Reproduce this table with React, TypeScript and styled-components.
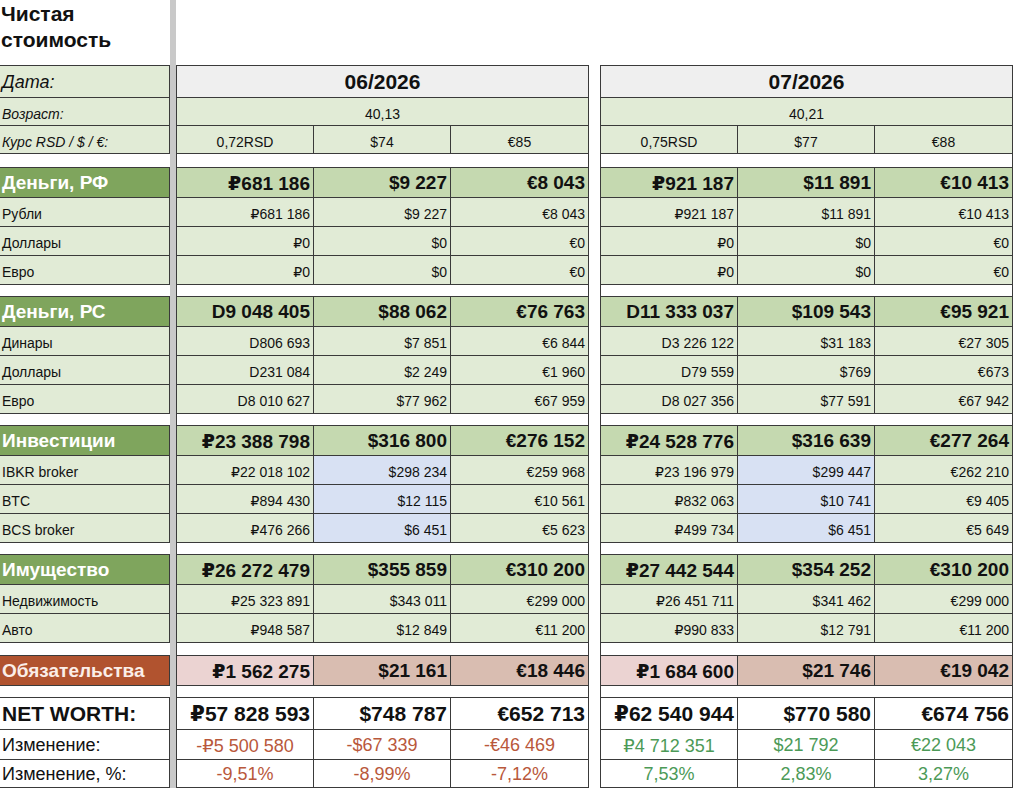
import React from "react";
import styled, { createGlobalStyle, css } from "styled-components";

const LINE = "#3a3a3a";
const PALE = "#e1ebd6";
const MID = "#c5d9b0";
const DARK = "#7fa55d";
const BLUE = "#d8e1f3";
const PINK = "#ebd3d2";
const SALMON = "#d9bdb1";
const BRICK = "#b1532f";
const RED = "#b9583b";
const GREEN = "#4c9a57";

type Triple = [string, string, string];

type Item = { label: string; a: Triple; b: Triple };
type Section = { title: string; a: Triple; b: Triple; items: Item[]; blueCol?: number };

const sections: Section[] = [
  {
    title: "Деньги, РФ",
    a: ["₽681 186", "$9 227", "€8 043"],
    b: ["₽921 187", "$11 891", "€10 413"],
    items: [
      { label: "Рубли", a: ["₽681 186", "$9 227", "€8 043"], b: ["₽921 187", "$11 891", "€10 413"] },
      { label: "Доллары", a: ["₽0", "$0", "€0"], b: ["₽0", "$0", "€0"] },
      { label: "Евро", a: ["₽0", "$0", "€0"], b: ["₽0", "$0", "€0"] },
    ],
  },
  {
    title: "Деньги, РС",
    a: ["D9 048 405", "$88 062", "€76 763"],
    b: ["D11 333 037", "$109 543", "€95 921"],
    items: [
      { label: "Динары", a: ["D806 693", "$7 851", "€6 844"], b: ["D3 226 122", "$31 183", "€27 305"] },
      { label: "Доллары", a: ["D231 084", "$2 249", "€1 960"], b: ["D79 559", "$769", "€673"] },
      { label: "Евро", a: ["D8 010 627", "$77 962", "€67 959"], b: ["D8 027 356", "$77 591", "€67 942"] },
    ],
  },
  {
    title: "Инвестиции",
    a: ["₽23 388 798", "$316 800", "€276 152"],
    b: ["₽24 528 776", "$316 639", "€277 264"],
    blueCol: 1,
    items: [
      { label: "IBKR broker", a: ["₽22 018 102", "$298 234", "€259 968"], b: ["₽23 196 979", "$299 447", "€262 210"] },
      { label: "BTC", a: ["₽894 430", "$12 115", "€10 561"], b: ["₽832 063", "$10 741", "€9 405"] },
      { label: "BCS broker", a: ["₽476 266", "$6 451", "€5 623"], b: ["₽499 734", "$6 451", "€5 649"] },
    ],
  },
  {
    title: "Имущество",
    a: ["₽26 272 479", "$355 859", "€310 200"],
    b: ["₽27 442 544", "$354 252", "€310 200"],
    items: [
      { label: "Недвижимость", a: ["₽25 323 891", "$343 011", "€299 000"], b: ["₽26 451 711", "$341 462", "€299 000"] },
      { label: "Авто", a: ["₽948 587", "$12 849", "€11 200"], b: ["₽990 833", "$12 791", "€11 200"] },
    ],
  },
];

const months = [
  { date: "06/2026", age: "40,13", rates: ["0,72RSD", "$74", "€85"] },
  { date: "07/2026", age: "40,21", rates: ["0,75RSD", "$77", "€88"] },
];

const liabilities: { a: Triple; b: Triple } = {
  a: ["₽1 562 275", "$21 161", "€18 446"],
  b: ["₽1 684 600", "$21 746", "€19 042"],
};

const netWorth: { a: Triple; b: Triple } = {
  a: ["₽57 828 593", "$748 787", "€652 713"],
  b: ["₽62 540 944", "$770 580", "€674 756"],
};

const change: { a: Triple; b: Triple } = {
  a: ["-₽5 500 580", "-$67 339", "-€46 469"],
  b: ["₽4 712 351", "$21 792", "€22 043"],
};

const changePct: { a: Triple; b: Triple } = {
  a: ["-9,51%", "-8,99%", "-7,12%"],
  b: ["7,53%", "2,83%", "3,27%"],
};

const GlobalStyle = createGlobalStyle`
  html, body { margin: 0; padding: 0; background: #fff; }
  body { font-family: "Liberation Sans", Arial, "DejaVu Sans", sans-serif; color: #111; }
`;

const Sheet = styled.div`
  width: 1024px;
  height: 791px;
  overflow: hidden;
  display: flex;
  flex-direction: column;
`;

const Row = styled.div<{ $h: number }>`
  display: flex;
  flex: none;
  height: ${(p) => p.$h}px;
`;

const Title = styled.div`
  width: 170px;
  flex: none;
  box-sizing: border-box;
  padding: 1px 0 0 1px;
  font-size: 21px;
  line-height: 26px;
  font-weight: 700;
  color: #111;
`;

type LabelKind = "date" | "meta" | "section" | "debt" | "item" | "net" | "change" | "blank";

const labelKinds: Record<LabelKind, ReturnType<typeof css>> = {
  date: css`background: ${PALE}; font-size: 18px; font-style: italic; padding-top: 2px;`,
  meta: css`background: ${PALE}; font-size: 14px; font-style: italic; padding-top: 4px;`,
  section: css`background: ${DARK}; color: #fff; font-size: 19px; font-weight: 700;`,
  debt: css`background: ${BRICK}; color: #fbeee8; font-size: 19px; font-weight: 700;`,
  item: css`background: ${PALE}; font-size: 14px; padding-top: 3px;`,
  net: css`background: #fff; font-size: 21px; font-weight: 700;`,
  change: css`background: #fff; font-size: 18px; padding-top: 2px;`,
  blank: css`background: #fff; border-color: transparent !important;`,
};

const Label = styled.div<{ $kind: LabelKind; $top?: boolean }>`
  width: 170px;
  flex: none;
  box-sizing: border-box;
  display: flex;
  align-items: center;
  padding-left: 2px;
  white-space: nowrap;
  border-right: 1px solid ${LINE};
  border-bottom: 1px solid ${LINE};
  border-top: ${(p) => (p.$top ? `1px solid ${LINE}` : "0")};
  ${(p) => labelKinds[p.$kind]}
`;

const Freeze = styled.div`
  width: 6px;
  flex: none;
  background: #c9c9c9;
`;

const Gutter = styled.div`
  width: 11px;
  flex: none;
`;

const Block = styled.div<{ $cols: number; $top?: boolean; $gap?: boolean }>`
  width: 413px;
  flex: none;
  box-sizing: border-box;
  display: grid;
  grid-template-columns: repeat(${(p) => p.$cols}, 1fr);
  border-left: 1px solid ${LINE};
  border-right: 1px solid ${LINE};
  border-top: ${(p) => (p.$top ? `1px solid ${LINE}` : "0")};
  border-bottom: ${(p) => (p.$gap ? "0" : `1px solid ${LINE}`)};
`;

const Cell = styled.div<{
  $bg?: string;
  $align?: "left" | "center" | "right";
  $size?: number;
  $bold?: boolean;
  $color?: string;
  $lift?: number;
}>`
  display: flex;
  align-items: center;
  justify-content: ${(p) =>
    p.$align === "center" ? "center" : p.$align === "left" ? "flex-start" : "flex-end"};
  padding: ${(p) => p.$lift ?? 1}px 3px 0 3px;
  min-width: 0;
  white-space: nowrap;
  overflow: hidden;
  background: ${(p) => p.$bg ?? "#fff"};
  font-size: ${(p) => p.$size ?? 14}px;
  font-weight: ${(p) => (p.$bold ? 700 : 400)};
  color: ${(p) => p.$color ?? "#111"};
  border-right: 1px solid ${LINE};
  &:last-child {
    border-right: 0;
  }
`;

type CellStyle = {
  bg?: (i: number) => string;
  align?: "left" | "center" | "right";
  size?: number;
  bold?: boolean;
  color?: string;
  lift?: number;
};

function Triplet({ values, look, top }: { values: Triple; look: CellStyle; top?: boolean }) {
  return (
    <Block $cols={3} $top={top}>
      {values.map((v, i) => (
        <Cell
          key={i}
          $bg={look.bg ? look.bg(i) : undefined}
          $align={look.align}
          $size={look.size}
          $bold={look.bold}
          $color={look.color}
          $lift={look.lift}
        >
          {v}
        </Cell>
      ))}
    </Block>
  );
}

function GapRow({ h }: { h: number }) {
  return (
    <Row $h={h}>
      <Label $kind="blank" />
      <Freeze />
      <Block $cols={1} $gap />
      <Gutter />
      <Block $cols={1} $gap />
    </Row>
  );
}

function DataRow({
  h,
  label,
  kind,
  a,
  b,
  lookA,
  lookB,
  top,
}: {
  h: number;
  label: string;
  kind: LabelKind;
  a: Triple;
  b: Triple;
  lookA: CellStyle;
  lookB?: CellStyle;
  top?: boolean;
}) {
  return (
    <Row $h={h}>
      <Label $kind={kind} $top={top}>
        {label}
      </Label>
      <Freeze />
      <Triplet values={a} look={lookA} top={top} />
      <Gutter />
      <Triplet values={b} look={lookB ?? lookA} top={top} />
    </Row>
  );
}

const headerLook: CellStyle = { bg: () => MID, size: 19, bold: true };
const debtLook: CellStyle = { bg: (i) => (i === 0 ? PINK : SALMON), size: 19, bold: true };
const netLook: CellStyle = { size: 21, bold: true };

export default function App() {
  return (
    <Sheet>
      <GlobalStyle />
      <Row $h={65}>
        <Title>
          Чистая
          <br />
          стоимость
        </Title>
        <Freeze />
      </Row>

      <Row $h={33}>
        <Label $kind="date" $top>
          Дата:
        </Label>
        <Freeze />
        {months.map((m, i) => (
          <React.Fragment key={m.date}>
            {i > 0 && <Gutter />}
            <Block $cols={1} $top>
              <Cell $bg="#efefef" $align="center" $size={21} $bold>
                {m.date}
              </Cell>
            </Block>
          </React.Fragment>
        ))}
      </Row>
      <Row $h={28}>
        <Label $kind="meta">Возраст:</Label>
        <Freeze />
        {months.map((m, i) => (
          <React.Fragment key={m.date}>
            {i > 0 && <Gutter />}
            <Block $cols={1}>
              <Cell $bg={PALE} $align="center" $lift={4}>
                {m.age}
              </Cell>
            </Block>
          </React.Fragment>
        ))}
      </Row>
      <Row $h={28}>
        <Label $kind="meta">Курс RSD / $ / €:</Label>
        <Freeze />
        {months.map((m, i) => (
          <React.Fragment key={m.date}>
            {i > 0 && <Gutter />}
            <Block $cols={3}>
              {m.rates.map((r) => (
                <Cell key={r} $bg={PALE} $align="center" $lift={4}>
                  {r}
                </Cell>
              ))}
            </Block>
          </React.Fragment>
        ))}
      </Row>

      {sections.map((s, si) => (
        <React.Fragment key={s.title}>
          <GapRow h={si === 0 ? 13 : 11} />
          <DataRow h={31} label={s.title} kind="section" a={s.a} b={s.b} lookA={headerLook} top />
          {s.items.map((it) => (
            <DataRow
              key={it.label}
              h={29}
              label={it.label}
              kind="item"
              a={it.a}
              b={it.b}
              lookA={{ bg: (i) => (i === s.blueCol ? BLUE : PALE), lift: 3 }}
            />
          ))}
        </React.Fragment>
      ))}

      <GapRow h={12} />
      <DataRow h={31} label="Обязательства" kind="debt" a={liabilities.a} b={liabilities.b} lookA={debtLook} top />
      <GapRow h={11} />
      <DataRow h={33} label="NET WORTH:" kind="net" a={netWorth.a} b={netWorth.b} lookA={netLook} top />
      <DataRow
        h={30}
        label="Изменение:"
        kind="change"
        a={change.a}
        b={change.b}
        lookA={{ align: "center", size: 18, color: RED, lift: 2 }}
        lookB={{ align: "center", size: 18, color: GREEN, lift: 2 }}
      />
      <DataRow
        h={28}
        label="Изменение, %:"
        kind="change"
        a={changePct.a}
        b={changePct.b}
        lookA={{ align: "center", size: 18, color: RED, lift: 2 }}
        lookB={{ align: "center", size: 18, color: GREEN, lift: 2 }}
      />
    </Sheet>
  );
}
